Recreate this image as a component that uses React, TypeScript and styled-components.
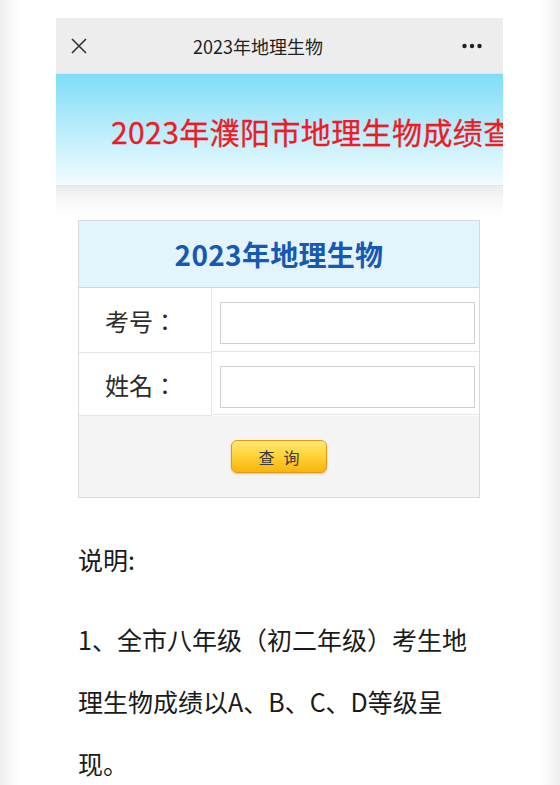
import React from "react";
import styled, { createGlobalStyle } from "styled-components";

const cjk = `"Noto Sans CJK SC", "Noto Sans", sans-serif`;
const cjkTc = `"Noto Sans CJK TC", "Noto Sans CJK SC", sans-serif`;

const GlobalStyle = createGlobalStyle`
  html, body {
    margin: 0;
    padding: 0;
  }
  body {
    font-family: ${cjk};
    background: linear-gradient(to right, #efefef 0, #fff 20px, #fff calc(100% - 20px), #efefef 100%);
    min-height: 785px;
  }
`;

const Screen = styled.div`
  width: 447px;
  margin: 18px 0 0 56px;
  display: flex;
  flex-direction: column;
`;

const NavBar = styled.div`
  height: 55px;
  background: #ededed;
  display: grid;
  grid-template-columns: 60px 1fr 103px;
  align-items: center;
`;

const NavTitle = styled.div`
  text-align: center;
  font-size: 18px;
  color: #1f1f1f;
`;

const NavIcon = styled.div<{ $align: "start" | "end" }>`
  display: flex;
  justify-content: ${(p) => (p.$align === "start" ? "flex-start" : "flex-end")};
  padding: ${(p) => (p.$align === "start" ? "0 0 0 15px" : "0 21px 0 0")};
`;

const Banner = styled.div`
  height: 111px;
  background: linear-gradient(to bottom, #7fddf8 0%, #bfeefc 55%, #f2fcfe 100%);
  border-top: 1px solid #c9ecf5;
  border-bottom: 1px solid #dfe6e8;
  display: flex;
  align-items: center;
  padding-left: 55px;
  overflow: hidden;
  white-space: nowrap;
`;

const BannerTitle = styled.div`
  font-size: 30px;
  color: #ee1b24;
  letter-spacing: 0.4px;
  margin-top: 2px;
  -webkit-text-stroke: 0.3px #ee1b24;
`;

const Content = styled.div`
  background: linear-gradient(to bottom, #ececec 0, #f7f7f7 14px, #fff 32px);
  padding: 34px 23px 0 22px;
`;

const Card = styled.div`
  border: 1px solid #dadada;
  display: grid;
  grid-template-columns: 133px 1fr;
`;

const CardHeader = styled.div`
  grid-column: 1 / -1;
  height: 66px;
  background: #e3f4fd;
  border-bottom: 1px solid #b8dcee;
  display: flex;
  align-items: center;
  justify-content: center;
  font-size: 28px;
  font-weight: 700;
  color: #1659b4;
  letter-spacing: 0.3px;
`;

const Label = styled.div<{ $h: number }>`
  height: ${(p) => p.$h}px;
  border-right: 1px solid #e6e6e6;
  border-bottom: 1px solid #e6e6e6;
  display: flex;
  align-items: center;
  padding-left: 26px;
  font-family: ${cjkTc};
  font-size: 24px;
  color: #2b2b2b;
`;

const Field = styled.div<{ $h: number }>`
  box-sizing: border-box;
  height: ${(p) => p.$h}px;
  border-bottom: 1px solid #e6e6e6;
  display: flex;
  align-items: center;
  padding: 7px 4px 0 8px;
`;

const Input = styled.input`
  box-sizing: border-box;
  width: 100%;
  height: 42px;
  border: 1px solid #cfcfcf;
  background: #fff;
  outline: none;
`;

const Footer = styled.div`
  grid-column: 1 / -1;
  height: 81px;
  background: #f4f4f4;
  display: flex;
  align-items: center;
  justify-content: center;
`;

const QueryButton = styled.button`
  width: 96px;
  height: 33px;
  border: 1px solid #e19a16;
  border-radius: 6px;
  background: linear-gradient(to bottom, #ffe875 0%, #ffd43a 45%, #f7b50c 100%);
  box-shadow: 0 1px 2px rgba(160, 100, 0, 0.35);
  font-family: ${cjk};
  font-size: 16px;
  color: #3a3a3a;
  letter-spacing: 9px;
  padding: 0 0 0 9px;
`;

const Notes = styled.div`
  padding: 30px 0 0 0;
  width: 402px;
`;

const Para = styled.p<{ $gap: number }>`
  margin: 0 0 ${(p) => p.$gap}px;
  font-size: 25px;
  line-height: 62px;
  color: #1a1a1a;
`;

const CloseIcon = () => (
  <svg width="16" height="16" viewBox="0 0 16 16">
    <path d="M1 1 L15 15 M15 1 L1 15" stroke="#333" strokeWidth="1.6" fill="none" />
  </svg>
);

const MoreIcon = () => (
  <svg width="20" height="6" viewBox="0 0 20 6">
    <circle cx="2.5" cy="3" r="2.2" fill="#222" />
    <circle cx="10" cy="3" r="2.2" fill="#222" />
    <circle cx="17.5" cy="3" r="2.2" fill="#222" />
  </svg>
);

export default function App() {
  return (
    <>
      <GlobalStyle />
      <Screen>
        <NavBar>
          <NavIcon $align="start">
            <CloseIcon />
          </NavIcon>
          <NavTitle>2023年地理生物</NavTitle>
          <NavIcon $align="end">
            <MoreIcon />
          </NavIcon>
        </NavBar>
        <Banner>
          <BannerTitle>2023年濮阳市地理生物成绩查询</BannerTitle>
        </Banner>
        <Content>
          <Card>
            <CardHeader>2023年地理生物</CardHeader>
            <Label $h={64}>考号：</Label>
            <Field $h={64}>
              <Input type="text" />
            </Field>
            <Label $h={62}>姓名：</Label>
            <Field $h={62}>
              <Input type="text" />
            </Field>
            <Footer>
              <QueryButton>查询</QueryButton>
            </Footer>
          </Card>
          <Notes>
            <Para $gap={18}>说明:</Para>
            <Para $gap={0}>1、全市八年级（初二年级）考生地理生物成绩以A、B、C、D等级呈现。</Para>
          </Notes>
        </Content>
      </Screen>
    </>
  );
}
